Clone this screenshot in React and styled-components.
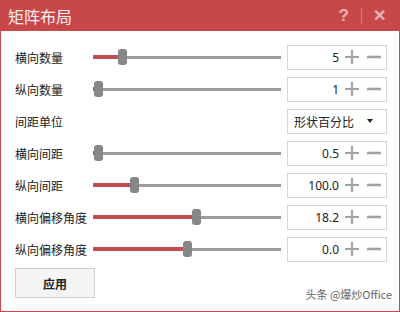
import React from 'react';
import styled, { createGlobalStyle } from 'styled-components';

const GlobalStyle = createGlobalStyle`
  html, body {
    margin: 0;
    padding: 0;
    background: #fff;
  }
  body {
    font-family: "Noto Sans", "Noto Sans CJK SC", sans-serif;
  }
`;

const RED = '#c8484a';

const Window = styled.div`
  position: relative;
  width: 400px;
  height: 312px;
  box-sizing: border-box;
  border: 1px solid ${RED};
  border-top: none;
  background: #fff;
  display: flex;
  flex-direction: column;
  overflow: hidden;
`;

const TitleBar = styled.div`
  height: 31px;
  margin: 0 -1px;
  background: ${RED};
  display: flex;
  align-items: center;
  padding: 0 14px 0 8px;
`;

const Title = styled.div`
  flex: 1;
  color: #fdf0f0;
  font-family: "Noto Sans CJK SC", sans-serif;
  font-size: 16px;
`;

const TitleAction = styled.div`
  color: rgba(255, 255, 255, 0.6);
  font-family: "Liberation Sans", sans-serif;
  font-size: ${p => p.size || 17}px;
  font-weight: bold;
  line-height: 1;
`;

const Divider = styled.div`
  width: 1px;
  height: 16px;
  background: rgba(255, 255, 255, 0.28);
  margin: 0 11px 0 12px;
`;

const Body = styled.div`
  padding: 10px 13px 0 14px;
  display: flex;
  flex-direction: column;
`;

const Row = styled.div`
  height: 32px;
  display: grid;
  grid-template-columns: 72px 188px 100px;
  column-gap: 6px;
  align-items: center;
`;

const Label = styled.div`
  font-family: "Noto Sans CJK SC", sans-serif;
  font-size: 12px;
  color: #222;
  white-space: nowrap;
`;

const SliderWrap = styled.div`
  position: relative;
  height: 16px;
`;

const Track = styled.div`
  position: absolute;
  left: 0;
  right: 0;
  top: 7px;
  height: 3px;
  background: #9d9d9d;
`;

const Fill = styled.div`
  position: absolute;
  left: 0;
  top: 6px;
  height: 4px;
  background: #c44c4d;
`;

const Thumb = styled.div`
  position: absolute;
  top: 0;
  width: 9px;
  height: 16px;
  border-radius: 3px;
  background: #878787;
`;

const Box = styled.div`
  height: 25px;
  box-sizing: border-box;
  border: 1px solid #d6d6d6;
  background: #fff;
  display: flex;
  align-items: center;
  padding: 0 5px 0 6px;
`;

const Value = styled.div`
  flex: 1;
  text-align: right;
  font-family: "Noto Sans", sans-serif;
  font-size: 12px;
  color: #222;
  margin-right: 6px;
`;

const StepIcon = styled.svg`
  width: 14px;
  height: 14px;
  margin-left: ${p => p.gap || 0}px;
  flex: none;
`;

const SelectText = styled.div`
  flex: 1;
  font-family: "Noto Sans CJK SC", sans-serif;
  font-size: 12px;
  color: #222;
`;

const Caret = styled.div`
  width: 0;
  height: 0;
  border-left: 3px solid transparent;
  border-right: 3px solid transparent;
  border-top: 4px solid #222;
  margin-right: 8px;
`;

const ApplyButton = styled.button`
  margin-top: 3px;
  width: 80px;
  height: 30px;
  border: 1px solid #cfcfcf;
  background: #f4f4f4;
  font-family: "Noto Sans CJK SC", sans-serif;
  font-size: 12px;
  font-weight: bold;
  color: #222;
  padding: 0;
`;

const Watermark = styled.div`
  position: absolute;
  right: 7px;
  bottom: 9px;
  font-family: "Noto Sans CJK SC", sans-serif;
  font-size: 11px;
  color: #666;
`;

const Plus = () => (
  <StepIcon viewBox="0 0 14 14">
    <path d="M7 0v14M0 7h14" stroke="#a3a3a3" strokeWidth="2.2" />
  </StepIcon>
);

const Minus = () => (
  <StepIcon viewBox="0 0 14 14" gap={8}>
    <path d="M0 7h14" stroke="#a3a3a3" strokeWidth="2.6" />
  </StepIcon>
);

const Slider = ({ pos }) => (
  <SliderWrap>
    <Track />
    <Fill style={{ width: pos }} />
    <Thumb style={{ left: pos }} />
  </SliderWrap>
);

const rows = [
  { label: '横向数量', pos: 25, value: '5' },
  { label: '纵向数量', pos: 1, value: '1' },
  { label: '间距单位', select: '形状百分比' },
  { label: '横向间距', pos: 1, value: '0.5' },
  { label: '纵向间距', pos: 37, value: '100.0' },
  { label: '横向偏移角度', pos: 99, value: '18.2' },
  { label: '纵向偏移角度', pos: 90, value: '0.0' },
];

const App = () => (
  <>
    <GlobalStyle />
    <Window>
      <TitleBar>
        <Title>矩阵布局</Title>
        <TitleAction>?</TitleAction>
        <Divider />
        <TitleAction size={16}>✕</TitleAction>
      </TitleBar>
      <Body>
        {rows.map(r => (
          <Row key={r.label}>
            <Label>{r.label}</Label>
            {r.select ? <div /> : <Slider pos={r.pos} />}
            {r.select ? (
              <Box>
                <SelectText>{r.select}</SelectText>
                <Caret />
              </Box>
            ) : (
              <Box>
                <Value>{r.value}</Value>
                <Plus />
                <Minus />
              </Box>
            )}
          </Row>
        ))}
        <ApplyButton>应用</ApplyButton>
      </Body>
      <Watermark>头条 @爆炒Office</Watermark>
    </Window>
  </>
);

export default App;
